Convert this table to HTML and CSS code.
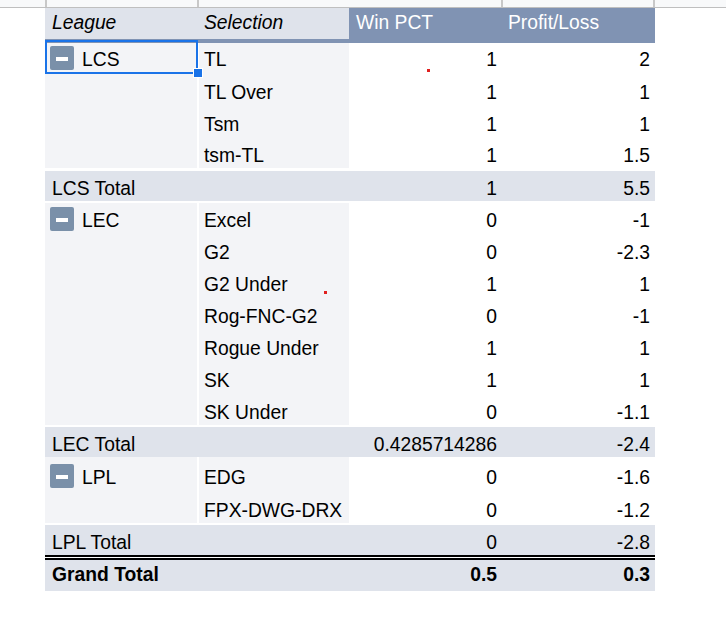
FILE: index.html
```html
<!DOCTYPE html>
<html>
<head>
<meta charset="utf-8">
<link rel="stylesheet" href="styles.css">
</head>
<body>
<div class="strip">
  <div class="strip-col s1"></div>
  <div class="strip-col s2"></div>
  <div class="strip-col s3"></div>
  <div class="strip-col s4"></div>
</div>
<div class="pivot">
  <div class="row head">
    <div class="cell h-lg"><em>League</em></div>
    <div class="cell h-sel"><em>Selection</em></div>
    <div class="cell h-dark h-win">Win PCT</div>
    <div class="cell h-dark h-pl">Profit/Loss</div>
  </div>

  <div class="group gap3">
    <div class="row r29">
      <div class="cell lg"><span class="toggle"><span class="bar"></span></span>LCS</div>
      <div class="cell sel">TL</div>
      <div class="cell num">1</div>
      <div class="cell num">2</div>
    </div>
    <div class="row r33">
      <div class="cell lg"></div>
      <div class="cell sel">TL Over</div>
      <div class="cell num">1</div>
      <div class="cell num">1</div>
    </div>
    <div class="row r32">
      <div class="cell lg"></div>
      <div class="cell sel">Tsm</div>
      <div class="cell num">1</div>
      <div class="cell num">1</div>
    </div>
    <div class="row r31">
      <div class="cell lg"></div>
      <div class="cell sel">tsm-TL</div>
      <div class="cell num">1</div>
      <div class="cell num">1.5</div>
    </div>
  </div>
  <div class="row tot gap2">
    <div class="cell tl">LCS Total</div>
    <div class="cell"></div>
    <div class="cell num">1</div>
    <div class="cell num">5.5</div>
  </div>

  <div class="group gap2">
    <div class="row r30">
      <div class="cell lg"><span class="toggle"><span class="bar"></span></span>LEC</div>
      <div class="cell sel">Excel</div>
      <div class="cell num">0</div>
      <div class="cell num">-1</div>
    </div>
    <div class="row r32">
      <div class="cell lg"></div>
      <div class="cell sel">G2</div>
      <div class="cell num">0</div>
      <div class="cell num">-2.3</div>
    </div>
    <div class="row r32">
      <div class="cell lg"></div>
      <div class="cell sel">G2 Under</div>
      <div class="cell num">1</div>
      <div class="cell num">1</div>
    </div>
    <div class="row r32">
      <div class="cell lg"></div>
      <div class="cell sel">Rog-FNC-G2</div>
      <div class="cell num">0</div>
      <div class="cell num">-1</div>
    </div>
    <div class="row r32">
      <div class="cell lg"></div>
      <div class="cell sel">Rogue Under</div>
      <div class="cell num">1</div>
      <div class="cell num">1</div>
    </div>
    <div class="row r32">
      <div class="cell lg"></div>
      <div class="cell sel">SK</div>
      <div class="cell num">1</div>
      <div class="cell num">1</div>
    </div>
    <div class="row r32">
      <div class="cell lg"></div>
      <div class="cell sel">SK Under</div>
      <div class="cell num">0</div>
      <div class="cell num">-1.1</div>
    </div>
  </div>
  <div class="row tot">
    <div class="cell tl">LEC Total</div>
    <div class="cell"></div>
    <div class="cell num">0.4285714286</div>
    <div class="cell num">-2.4</div>
  </div>

  <div class="group gap2">
    <div class="row r33">
      <div class="cell lg"><span class="toggle"><span class="bar"></span></span>LPL</div>
      <div class="cell sel">EDG</div>
      <div class="cell num">0</div>
      <div class="cell num">-1.6</div>
    </div>
    <div class="row r33">
      <div class="cell lg"></div>
      <div class="cell sel">FPX-DWG-DRX</div>
      <div class="cell num">0</div>
      <div class="cell num">-1.2</div>
    </div>
  </div>
  <div class="row tot">
    <div class="cell tl">LPL Total</div>
    <div class="cell"></div>
    <div class="cell num">0</div>
    <div class="cell num">-2.8</div>
  </div>

  <div class="row grand">
    <div class="cell tl">Grand Total</div>
    <div class="cell"></div>
    <div class="cell num">0.5</div>
    <div class="cell num">0.3</div>
  </div>

  <div class="selbox"></div>
  <div class="handle"></div>
  <span class="dot dot1"></span>
  <span class="dot dot2"></span>
</div>
</body>
</html>
```

FILE: styles.css
```css
body {
  margin: 0;
  background: #ffffff;
  color: #000000;
  font-family: "Liberation Sans", Arial, sans-serif;
  font-size: 19.3px;
}

.strip {
  display: flex;
  height: 7px;
  background: #f8f9fa;
  border-bottom: 1px solid #bfbfbf;
}
.strip-col {
  box-sizing: border-box;
  border-right: 2px solid #c8c8c8;
}
.s1 { width: 47px; }
.s2 { width: 152px; }
.s3 { width: 304px; }
.s4 { width: 152px; }

.pivot {
  position: relative;
  margin-left: 45px;
  width: 610px;
}

.row {
  display: grid;
  grid-template-columns: 152px 152px 153px 153px;
  box-sizing: border-box;
}

.cell {
  display: flex;
  align-items: flex-end;
  box-sizing: border-box;
  padding-bottom: 1px;
  line-height: 22px;
  white-space: nowrap;
}

/* header */
.head {
  height: 35px;
  background: #dfe3eb;
  border-bottom: 4px solid #8093b3;
}
.head .cell { padding-bottom: 5px; }
.h-lg { padding-left: 7px; }
.h-sel { padding-left: 7px; }
.h-dark { background: #8093b3; color: #ffffff; }
.h-win { padding-left: 7px; }
.h-pl { padding-left: 6px; }

/* group rows */
.r29 { height: 29px; }
.r30 { height: 30px; }
.r31 { height: 31px; }
.r32 { height: 32px; }
.r33 { height: 33px; }

.gap3 { margin-bottom: 3px; }
.gap2 { margin-bottom: 2px; }

.lg {
  background: #f3f4f7;
  padding-left: 5px;
}
.sel {
  background: #f3f4f7;
  border-left: 2px solid #ffffff;
  padding-left: 5px;
}
.num {
  justify-content: flex-end;
  padding-right: 5px;
}

.toggle {
  position: relative;
  flex: none;
  width: 24px;
  height: 24px;
  margin-right: 8px;
  margin-bottom: 1px;
  border-radius: 2px;
  background: #7a90a9;
}
.toggle .bar {
  position: absolute;
  left: 6px;
  top: 11px;
  width: 12px;
  height: 4px;
  background: #ffffff;
}

/* totals */
.tot {
  height: 30px;
  background: #dfe3eb;
}
.tl { padding-left: 7px; }

.grand {
  height: 36px;
  background: #dfe3eb;
  background-clip: padding-box;
  border-top: 5px double #000000;
  font-weight: bold;
}
.grand .cell { padding-bottom: 5px; }

/* overlays */
.selbox {
  position: absolute;
  left: 0;
  top: 32px;
  width: 153px;
  height: 34px;
  box-sizing: border-box;
  border: 2px solid #1a73e8;
}
.handle {
  position: absolute;
  left: 149px;
  top: 61px;
  width: 8px;
  height: 8px;
  background: #1a73e8;
  box-shadow: 0 0 0 1px #ffffff;
}
.dot {
  position: absolute;
  width: 3px;
  height: 3px;
  background: #e0201f;
}
.dot1 { left: 382px; top: 61px; }
.dot2 { left: 279px; top: 283px; }
```
